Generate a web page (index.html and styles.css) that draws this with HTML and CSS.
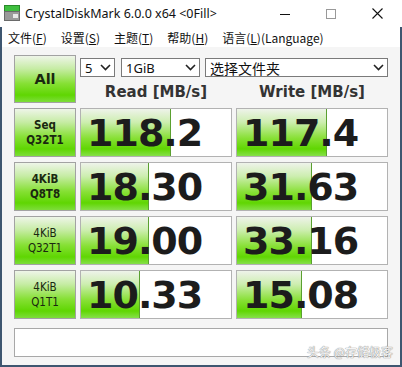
FILE: index.html
```html
<!DOCTYPE html>
<html lang="zh">
<head>
  <meta charset="UTF-8" />
  <title>CrystalDiskMark 6.0.0 x64 &lt;0Fill&gt;</title>
  <link rel="stylesheet" href="styles.css">
</head>
<body>

  <div class="window">
    <div class="titlebar">
      <svg class="app-icon" width="16" height="16" viewBox="0 0 16 16">
        <rect x="0.5" y="0.5" width="15" height="6" fill="#3fbf3f" stroke="#2a8a2a"/>
        <rect x="0.5" y="6.5" width="15" height="9" fill="#9a9a9a" stroke="#6a6a6a"/>
        <rect x="9" y="9" width="5" height="4" fill="#e8e8e8"/>
      </svg>
      <span class="title">CrystalDiskMark 6.0.0 x64 &lt;0Fill&gt;</span>
      <div class="controls">
        <div class="ctl">
          <svg width="10" height="10" viewBox="0 0 10 10"><line x1="0" y1="5.5" x2="10" y2="5.5" stroke="#111" stroke-width="1"/></svg>
        </div>
        <div class="ctl">
          <svg width="10" height="10" viewBox="0 0 10 10"><rect x="0.5" y="0.5" width="9" height="9" fill="none" stroke="#999" stroke-width="1"/></svg>
        </div>
        <div class="ctl">
          <svg width="11" height="11" viewBox="0 0 11 11"><path d="M0.5 0.5 L10.5 10.5 M10.5 0.5 L0.5 10.5" stroke="#111" stroke-width="1.1"/></svg>
        </div>
      </div>
    </div>

    <div class="frame">
      <nav class="menubar">
        <span class="menu-item">文件(<u>F</u>)</span>
        <span class="menu-item">设置(<u>S</u>)</span>
        <span class="menu-item">主题(<u>T</u>)</span>
        <span class="menu-item">帮助(<u>H</u>)</span>
        <span class="menu-item"><span>语言(<u>L</u>)(Language)</span></span>
      </nav>

      <main class="panel">
        <div class="head">
          <div class="btn all">All</div>
          <div class="head-right">
            <div class="selects">
              <div class="select sel-count"><span>5</span>
                <svg width="11" height="7" viewBox="0 0 11 7"><path d="M1 1 L5.5 5.5 L10 1" fill="none" stroke="#222" stroke-width="1.6"/></svg>
              </div>
              <div class="select sel-size"><span>1GiB</span>
                <svg width="11" height="7" viewBox="0 0 11 7"><path d="M1 1 L5.5 5.5 L10 1" fill="none" stroke="#222" stroke-width="1.6"/></svg>
              </div>
              <div class="select sel-drive"><span>选择文件夹</span>
                <svg width="11" height="7" viewBox="0 0 11 7"><path d="M1 1 L5.5 5.5 L10 1" fill="none" stroke="#222" stroke-width="1.6"/></svg>
              </div>
            </div>
            <div class="col-titles">
              <div>Read [MB/s]</div>
              <div>Write [MB/s]</div>
            </div>
          </div>
        </div>

        <div class="results">
          <div class="btn label strong">Seq<br>Q32T1</div>
          <div class="meter"><div class="fill" style="width:60%"></div><span class="value">118.2</span></div>
          <div class="meter"><div class="fill" style="width:60%"></div><span class="value">117.4</span></div>

          <div class="btn label strong">4KiB<br>Q8T8</div>
          <div class="meter"><div class="fill" style="width:45%"></div><span class="value">18.30</span></div>
          <div class="meter"><div class="fill" style="width:50%"></div><span class="value">31.63</span></div>

          <div class="btn label">4KiB<br>Q32T1</div>
          <div class="meter"><div class="fill" style="width:45%"></div><span class="value">19.00</span></div>
          <div class="meter"><div class="fill" style="width:50%"></div><span class="value">33.16</span></div>

          <div class="btn label">4KiB<br>Q1T1</div>
          <div class="meter"><div class="fill" style="width:39%"></div><span class="value">10.33</span></div>
          <div class="meter"><div class="fill" style="width:43%"></div><span class="value">15.08</span></div>
        </div>

        <div class="comment"></div>
      </main>
    </div>

    <div class="watermark">头条 @存储极客</div>
  </div>

</body>
</html>
```

FILE: styles.css
```css
body {
  margin: 0;
  padding: 0;
  background: #f3f3f3;
  font-family: "Noto Sans", "Noto Sans CJK SC", sans-serif;
  color: #111;
}

.window {
  position: relative;
  width: 402px;
  height: 367px;
  overflow: hidden;
  background: #ffffff;
}

/* title bar */
.titlebar {
  height: 27px;
  display: flex;
  align-items: center;
  background: #ffffff;
}

.app-icon {
  margin-left: 4px;
  margin-top: -2px;
}

.title {
  margin-left: 5px;
  font-size: 12.5px;
  color: #111;
}

.controls {
  margin-left: auto;
  display: flex;
  margin-right: 2px;
}

.ctl {
  width: 46px;
  height: 27px;
  display: flex;
  align-items: center;
  justify-content: center;
}

/* client area */
.frame {
  height: 340px;
  border: 2px solid #3e5670;
  border-top: none;
  box-sizing: border-box;
  background: #f5f5f5;
}

.menubar {
  height: 20px;
  display: flex;
  align-items: center;
  background: #ffffff;
  padding-left: 6px;
  font-family: "Noto Sans CJK SC", sans-serif;
  font-size: 12px;
  color: #111;
}

.menu-item {
  margin-right: 14px;
}

.panel {
  padding: 8px 0 0 12px;
}

.head {
  display: grid;
  grid-template-columns: 62px 308px;
  column-gap: 4px;
  height: 48px;
}

.btn {
  box-sizing: border-box;
  border: 1px solid #a2a2a2;
  background: linear-gradient(to bottom, #eef5e8 0%, #c6eca4 28%, #86e034 60%, #5fd602 85%, #7ddd3a 100%);
  display: flex;
  align-items: center;
  justify-content: center;
  text-align: center;
  color: #1a2810;
  font-family: "DejaVu Sans Condensed", "DejaVu Sans", sans-serif;
}

.all {
  font-family: "DejaVu Sans", sans-serif;
  font-weight: bold;
  font-size: 14.5px;
}

.head-right {
  display: flex;
  flex-direction: column;
}

.selects {
  display: flex;
  margin-top: 3px;
  height: 19px;
}

.select {
  box-sizing: border-box;
  height: 19px;
  border: 1px solid #7a7a7a;
  background: #ffffff;
  display: flex;
  align-items: center;
  justify-content: space-between;
  padding: 0 3px 0 4px;
  font-size: 13px;
  color: #111;
}

.sel-count { width: 35px; margin-right: 6px; }
.sel-size { width: 79px; margin-right: 5px; }
.sel-drive {
  width: 183px;
  font-family: "Noto Sans CJK SC", sans-serif;
  font-size: 14px;
}

.col-titles {
  flex: 1;
  display: grid;
  grid-template-columns: 152px 152px;
  column-gap: 4px;
  align-items: center;
  font-family: "DejaVu Sans", sans-serif;
  font-weight: bold;
  font-size: 15px;
  color: #333;
  text-align: center;
  padding-top: 4px;
}

.results {
  margin-top: 5px;
  display: grid;
  grid-template-columns: 62px 152px 152px;
  grid-auto-rows: 49px;
  column-gap: 4px;
  row-gap: 5px;
}

.label {
  font-size: 11.5px;
  line-height: 15px;
}

.label.strong {
  font-weight: bold;
}

.meter {
  box-sizing: border-box;
  border: 1px solid #b2b2b2;
  background: #ffffff;
  display: grid;
}

.fill,
.value {
  grid-area: 1 / 1;
}

.fill {
  height: 100%;
  background: linear-gradient(to bottom, #eef3ea 0%, #cdeeb0 28%, #88e036 62%, #60d602 85%, #86e04a 100%);
  border-right: 1px solid #5aa030;
  box-sizing: border-box;
}

.value {
  align-self: center;
  padding-left: 6px;
  font-family: "DejaVu Sans", sans-serif;
  font-weight: bold;
  font-size: 38px;
  letter-spacing: -1px;
  line-height: 1;
  color: #1c1c1c;
}

.comment {
  margin-top: 9px;
  width: 374px;
  height: 29px;
  box-sizing: border-box;
  border: 1px solid #a8a8a8;
  background: #ffffff;
}

.watermark {
  position: absolute;
  right: 9px;
  bottom: 7px;
  font-family: "Noto Sans CJK SC", sans-serif;
  font-size: 12px;
  color: #f4f4f4;
  text-shadow: 0 0 1px #888, 0 0 1px #888;
}
```
